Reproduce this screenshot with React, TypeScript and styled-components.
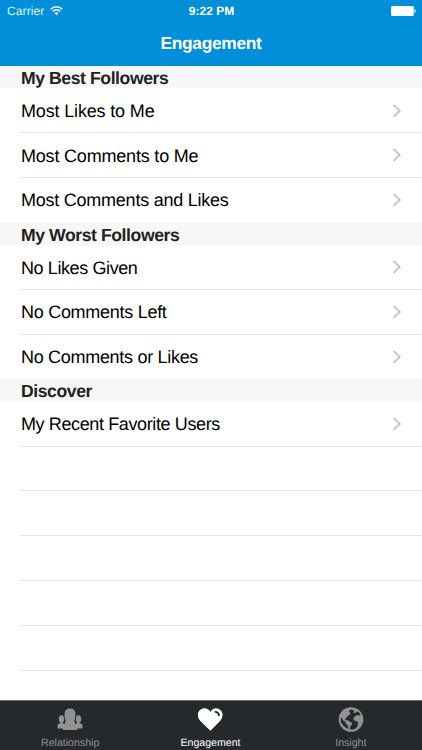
import React from "react";
import styled, { createGlobalStyle } from "styled-components";

const GlobalStyle = createGlobalStyle`
  * { box-sizing: border-box; }
  body { margin: 0; background: #fff; overflow: hidden; }
`;

const Screen = styled.div`
  width: 422px;
  height: 750px;
  display: flex;
  flex-direction: column;
  overflow: hidden;
  background: #fff;
  color: #000;
  font-family: "Liberation Sans", Arial, sans-serif;
  text-rendering: geometricPrecision;
`;

const TopBar = styled.header`
  flex: none;
  height: 65.8px;
  background: #008fd8;
  color: #fff;
`;

const StatusBar = styled.div`
  height: 22px;
  padding: 0 6px 0 7px;
  display: grid;
  grid-template-columns: 1fr auto 1fr;
  align-items: center;
  font-size: 12px;
  line-height: 22px;
`;

const Carrier = styled.div`
  display: flex;
  align-items: center;
  gap: 6px;
  letter-spacing: 0.1px;
  color: #e4f5fd;
`;

const Clock = styled.div`
  font-size: 12px;
  font-weight: 700;
`;

const StatusIcons = styled.div`
  display: flex;
  justify-content: flex-end;
`;

const Title = styled.h1`
  margin: 0;
  height: 43px;
  text-align: center;
  font-size: 17.4px;
  font-weight: 700;
  line-height: 43px;
  letter-spacing: -0.35px;
`;

const List = styled.main`
  flex: 1;
  min-height: 0;
  overflow: hidden;
`;

const SectionHeader = styled.h2`
  margin: 0;
  height: 22.4px;
  padding-left: 21px;
  background: #f7f7f7;
  color: #222;
  font-size: 17.6px;
  font-weight: 700;
  line-height: 24px;
  letter-spacing: -0.42px;
`;

const Row = styled.div<{ $last?: boolean }>`
  height: 44.8px;
  margin-left: 20px;
  padding: 1px 20px 0 1px;
  display: flex;
  align-items: center;
  justify-content: space-between;
  border-bottom: 1px solid ${(p) => (p.$last ? "transparent" : "#e6e6e7")};
`;

const RowLabel = styled.span<{ $spacing: number }>`
  font-size: 18px;
  line-height: 24px;
  padding-top: 0.4px;
  letter-spacing: ${(p) => p.$spacing}px;
`;

const TabBar = styled.nav`
  flex: none;
  height: 50.4px;
  padding-right: 1px;
  display: grid;
  grid-template-columns: repeat(3, 1fr);
  background: #25292c;
  border-top: 1px solid #6b6e70;
`;

const Tab = styled.div<{ $active?: boolean }>`
  display: flex;
  flex-direction: column;
  align-items: center;
  padding-top: 6px;
  color: ${(p) => (p.$active ? "#fff" : "#929292")};
`;

const TabLabel = styled.span`
  margin-top: 4px;
  font-size: 10.6px;
  line-height: 14px;
`;

const WifiIcon = () => (
  <svg width="13" height="10" viewBox="0 0 13 10" fill="none" stroke="#fff" strokeWidth="1.5">
    <path d="M.7 3.3C4-.1 9-.1 12.3 3.3M2.8 5.4c2.1-2.1 5.3-2.1 7.4 0" />
    <path d="M4.5 7.1c1.1-1 2.9-1 4 0l-2 2.1z" fill="#fff" stroke="none" />
  </svg>
);

const BatteryIcon = () => (
  <svg width="26" height="10" viewBox="0 0 26 10">
    <rect x="1.1" width="22.6" height="10" rx="1.3" fill="#fff" />
    <path d="M24.4 3.2q1.3.2 1.3 1.8t-1.3 1.8z" fill="#fff" />
  </svg>
);

const Chevron = () => (
  <svg width="10" height="16" viewBox="0 0 10 16" fill="none" stroke="#c4c4c9" strokeWidth="2">
    <path d="M1.6 1.9L7.6 7.9 1.6 13.9" />
  </svg>
);

const PeopleIcon = () => (
  <svg width="26" height="25" viewBox="0 0 26 25" fill="currentColor">
    <path d="M8 17.5v-2.6q1.3-.5.5-1.7Q7.500 11 7.500 7.400 7.500 1.500 13 1.500t5.500 5.900q0 3.600-1 5.800-.8 1.200.5 1.700v2.600z" />
    <ellipse cx="4.500" cy="12" rx="2.700" ry="3.800" />
    <ellipse cx="21.500" cy="12" rx="2.700" ry="3.800" />
    <path d="M3.300 14.500h2.600v1.700l1.800.8 2.500-1.700h5.600l2.500 1.700 1.800-.8v-1.700h2.600v1.700l2 .8q.7.400.7 1.600v3h-5.200v1.500H5.800v-1.500H.6v-3q0-1.200.7-1.600l2-.8z" />
  </svg>
);

const HeartIcon = () => (
  <svg width="26" height="25" viewBox="0 0 26 25">
    <path d="M13.400 23.800L3.600 14.300C-.4 10.200.3 4.700 3.700 2.500 7.200.3 11.400 1.300 13.400 4.900c2-3.600 5.900-4.600 9.300-2.400 3.400 2.200 4.100 7.700.1 11.800z" fill="currentColor" />
    <path d="M18.400 4.900q3 .2 3.600 3.400" fill="none" stroke="#25292c" strokeWidth="1.900" strokeLinecap="round" />
  </svg>
);

const GlobeIcon = () => (
  <svg width="26" height="25" viewBox="0 0 26 25">
    <circle cx="13" cy="12.500" r="12.300" fill="currentColor" />
    <g fill="#25292c">
      <path d="M11.400 3.300l1.700-.7 1.900.5.900 1.200-.7 1.600 2.500-.2 1.800-1.200 1.300.7 2 3-2 .3-1.700-.4-1.800 1-1.500 1.400-.3 2.100 1.600 1.500 2.300.4.600 1.600-.5 3.100-1.900 2.200-2.500 1-3.300-.1.300-2.600 1.700-2.300.1-1.600-2.300-1.200-2.200-1.500-1.800.3-.4-1.700 1.600-1.200 1.300-2 2.200-1.200-.1-1.500-1.200-1z" />
      <path d="M2.700 10.300l1.400 1 1 2.200 2.200 1.200.7 2 1.900 1.900.6 3.500-2.500-1.300-2.700-2.300L3 15.300z" />
    </g>
  </svg>
);

type Item = { text: string; spacing: number };

const sections: { title: string; items: Item[] }[] = [
  {
    title: "My Best Followers",
    items: [
      { text: "Most Likes to Me", spacing: -0.16 },
      { text: "Most Comments to Me", spacing: -0.19 },
      { text: "Most Comments and Likes", spacing: -0.24 },
    ],
  },
  {
    title: "My Worst Followers",
    items: [
      { text: "No Likes Given", spacing: -0.4 },
      { text: "No Comments Left", spacing: -0.28 },
      { text: "No Comments or Likes", spacing: -0.3 },
    ],
  },
  { title: "Discover", items: [{ text: "My Recent Favorite Users", spacing: -0.38 }] },
];

const emptyRows = [0, 1, 2, 3, 4, 5];

export default function App() {
  return (
    <Screen>
      <GlobalStyle />
      <TopBar>
        <StatusBar>
          <Carrier>
            Carrier
            <WifiIcon />
          </Carrier>
          <Clock>9:22 PM</Clock>
          <StatusIcons>
            <BatteryIcon />
          </StatusIcons>
        </StatusBar>
        <Title>Engagement</Title>
      </TopBar>
      <List>
        {sections.map((section, s) => (
          <section key={section.title}>
            <SectionHeader>{section.title}</SectionHeader>
            {section.items.map((item, i) => (
              <Row key={item.text} $last={s < sections.length - 1 && i === section.items.length - 1}>
                <RowLabel $spacing={item.spacing}>{item.text}</RowLabel>
                <Chevron />
              </Row>
            ))}
          </section>
        ))}
        {emptyRows.map((n) => (
          <Row key={n} />
        ))}
      </List>
      <TabBar>
        <Tab>
          <PeopleIcon />
          <TabLabel>Relationship</TabLabel>
        </Tab>
        <Tab $active>
          <HeartIcon />
          <TabLabel>Engagement</TabLabel>
        </Tab>
        <Tab>
          <GlobeIcon />
          <TabLabel>Insight</TabLabel>
        </Tab>
      </TabBar>
    </Screen>
  );
}
